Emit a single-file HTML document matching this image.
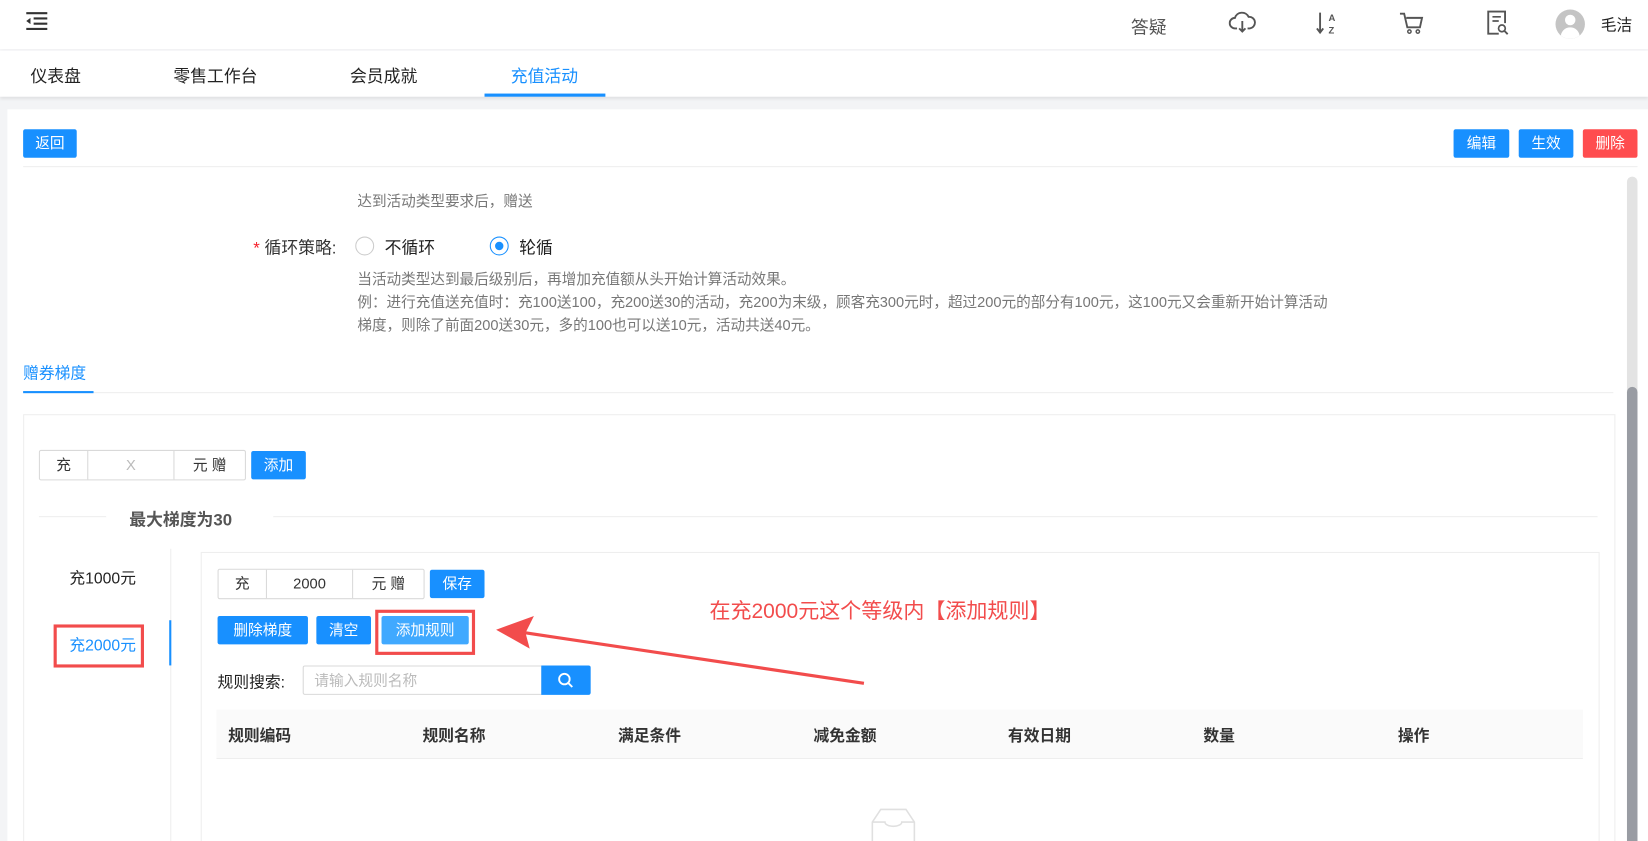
<!DOCTYPE html>
<html><head><meta charset="utf-8">
<style>
html,body{margin:0;padding:0;width:1648px;height:841px;overflow:hidden;background:#f3f4f6;}
#w{position:absolute;left:0;top:0;width:1568px;height:800px;overflow:hidden;transform:scale(1.05102,1.05125);transform-origin:0 0;font-family:"Liberation Sans","Noto Sans CJK SC",sans-serif;color:#333;}
.a{position:absolute;white-space:nowrap;}
.btn{position:absolute;background:#1890ff;color:#fff;font-size:14px;border-radius:2px;text-align:center;line-height:27px;height:27px;}
.gray{color:#777;font-size:13.9px;}
.ig{position:absolute;border:1px solid #d9d9d9;border-radius:2px;height:27px;background:#fff;font-size:14px;}
.ig div{position:absolute;top:0;height:27px;line-height:27px;text-align:center;border-right:1px solid #d9d9d9;}
.th{position:absolute;top:689px;font-size:15px;font-weight:bold;color:#333;}
</style></head><body>
<div id="w">
<div class="a" style="left:0;top:0;width:1568px;height:47px;background:#fff;box-shadow:0 1px 3px rgba(0,0,0,.06)"></div>
<svg class="a" style="left:24px;top:11px" width="22" height="18" viewBox="0 0 22 18"><path d="M1 1.5H21M8 6.5H21M8 11.5H21M1 16.5H21" stroke="#333" stroke-width="2"/><path d="M1 9L5 6V12Z" fill="#333"/></svg>
<div class="a" style="left:1076px;top:12px;font-size:17px;color:#555">答疑</div>
<svg class="a" style="left:1169px;top:11px" width="26" height="22" viewBox="0 0 26 22"><path d="M8 16H6a5 5 0 0 1 0-10 7 7 0 0 1 13-1 5 5 0 0 1 1 11h-2" fill="none" stroke="#555" stroke-width="1.8"/><path d="M13 9v10M10 16l3 3 3-3" fill="none" stroke="#555" stroke-width="1.8"/></svg>
<svg class="a" style="left:1252px;top:10px" width="22" height="24" viewBox="0 0 22 24"><path d="M4 2v19M1 17l3 4 3-4" fill="none" stroke="#555" stroke-width="1.8"/><text x="12" y="10" font-size="9" font-family="Liberation Sans" fill="#555" font-weight="bold">A</text><text x="12" y="22" font-size="9" font-family="Liberation Sans" fill="#555" font-weight="bold">Z</text></svg>
<svg class="a" style="left:1331px;top:11px" width="24" height="22" viewBox="0 0 24 22"><path d="M1 2h4l3 13h12l2-9H7" fill="none" stroke="#555" stroke-width="1.8"/><circle cx="10" cy="19" r="1.6" fill="none" stroke="#555" stroke-width="1.4"/><circle cx="18" cy="19" r="1.6" fill="none" stroke="#555" stroke-width="1.4"/></svg>
<svg class="a" style="left:1414px;top:9px" width="22" height="26" viewBox="0 0 22 26"><path d="M12 23H2V2h16v11" fill="none" stroke="#555" stroke-width="1.8"/><path d="M6 7h8M6 11h6" stroke="#555" stroke-width="1.6"/><circle cx="15" cy="18" r="3.2" fill="none" stroke="#555" stroke-width="1.6"/><path d="M17.5 20.5l3 3" stroke="#555" stroke-width="1.8"/></svg>
<div class="a" style="left:1480px;top:9px;width:28px;height:28px;border-radius:50%;background:#c4c4c4;overflow:hidden"><div class="a" style="left:9px;top:5px;width:10px;height:10px;border-radius:50%;background:#fff"></div><div class="a" style="left:5px;top:17px;width:18px;height:14px;border-radius:9px 9px 0 0;background:#fff"></div></div>
<div class="a" style="left:1523px;top:13px;font-size:15px;color:#222">毛洁</div>

<div class="a" style="left:0;top:48px;width:1568px;height:44px;background:#fff;box-shadow:0 2px 3px rgba(0,0,0,.08)"></div>
<div class="a" style="left:29px;top:59px;font-size:16px;color:#222">仪表盘</div>
<div class="a" style="left:165px;top:59px;font-size:16px;color:#222">零售工作台</div>
<div class="a" style="left:333px;top:59px;font-size:16px;color:#222">会员成就</div>
<div class="a" style="left:486px;top:59px;font-size:16px;color:#1890ff">充值活动</div>
<div class="a" style="left:461px;top:89px;width:115px;height:3px;background:#1890ff"></div>

<div class="a" style="left:7px;top:104px;width:1561px;height:800px;background:#fff"></div>
<div class="btn" style="left:22px;top:123px;width:51px">返回</div>
<div class="btn" style="left:1383px;top:123px;width:53px">编辑</div>
<div class="btn" style="left:1445px;top:123px;width:52px">生效</div>
<div class="btn" style="left:1506px;top:123px;width:52px;background:#ff4d4f">删除</div>
<div class="a" style="left:22px;top:158px;width:1536px;height:1px;background:#eee"></div>
<div class="a" style="left:1548px;top:168px;width:10px;height:740px;border-radius:5px;background:#e3e3e3"></div>
<div class="a" style="left:1548px;top:368px;width:10px;height:540px;border-radius:5px;background:#999ca3"></div>

<div class="a gray" style="left:340px;top:181px">达到活动类型要求后，赠送</div>
<div class="a" style="left:241px;top:222px;font-size:16px"><span style="color:#f5222d">*</span> 循环策略:</div>
<div class="a" style="left:338px;top:225px;width:16px;height:16px;border:1px solid #ccc;border-radius:50%"></div>
<div class="a" style="left:366px;top:222px;font-size:16px;color:#222">不循环</div>
<div class="a" style="left:466px;top:225px;width:16px;height:16px;border:1px solid #1890ff;border-radius:50%"><div class="a" style="left:4px;top:4px;width:8px;height:8px;border-radius:50%;background:#1890ff"></div></div>
<div class="a" style="left:494px;top:222px;font-size:16px;color:#222">轮循</div>
<div class="a gray" style="left:340px;top:255px">当活动类型达到最后级别后，再增加充值额从头开始计算活动效果。</div>
<div class="a gray" style="left:340px;top:277px">例：进行充值送充值时：充100送100，充200送30的活动，充200为末级，顾客充300元时，超过200元的部分有100元，这100元又会重新开始计算活动</div>
<div class="a gray" style="left:340px;top:299px">梯度，则除了前面200送30元，多的100也可以送10元，活动共送40元。</div>

<div class="a" style="left:22px;top:344px;font-size:15px;color:#1890ff">赠券梯度</div>
<div class="a" style="left:22px;top:373px;width:1513px;height:1px;background:#eee"></div>
<div class="a" style="left:22px;top:372px;width:67px;height:2px;background:#1890ff"></div>
<div class="a" style="left:22px;top:394px;width:1513px;height:520px;border:1px solid #eee"></div>

<div class="ig" style="left:37px;top:428px;width:195px"><div style="left:0;width:45px">充</div><div style="left:46px;width:81px;color:#bbb">X</div><div style="left:128px;width:67px;border:none">元 赠</div></div>
<div class="btn" style="left:239px;top:429px;width:52px">添加</div>
<div class="a" style="left:37px;top:491px;width:64px;height:1px;background:#eee"></div>
<div class="a" style="left:123px;top:481px;font-size:16px;font-weight:bold;color:#555">最大梯度为30</div>
<div class="a" style="left:260px;top:491px;width:1260px;height:1px;background:#eee"></div>

<div class="a" style="left:66px;top:539px;font-size:15px;color:#222">充1000元</div>
<div class="a" style="left:66px;top:603px;font-size:15px;color:#1890ff">充2000元</div>
<div class="a" style="left:51px;top:594px;width:80px;height:35px;border:3px solid #f24c4c"></div>
<div class="a" style="left:162px;top:522px;width:1px;height:390px;background:#eee"></div>
<div class="a" style="left:161px;top:590px;width:2px;height:43px;background:#1890ff"></div>

<div class="a" style="left:191px;top:525px;width:1329px;height:390px;border:1px solid #eee"></div>
<div class="ig" style="left:207px;top:541px;width:195px"><div style="left:0;width:45px">充</div><div style="left:46px;width:81px">2000</div><div style="left:128px;width:67px;border:none">元 赠</div></div>
<div class="btn" style="left:409px;top:542px;width:52px">保存</div>
<div class="btn" style="left:207px;top:586px;width:86px">删除梯度</div>
<div class="btn" style="left:301px;top:586px;width:52px">清空</div>
<div class="btn" style="left:363px;top:586px;width:83px;background:#40a9ff">添加规则</div>
<div class="a" style="left:357px;top:580px;width:89px;height:37px;border:3px solid #f24c4c"></div>

<div class="a" style="left:207px;top:638px;font-size:15px;color:#222">规则搜索:</div>
<div class="a" style="left:288px;top:633px;width:226px;height:26px;border:1px solid #d9d9d9;border-radius:2px 0 0 2px;font-size:14px;color:#bbb;line-height:26px;text-indent:10px">请输入规则名称</div>
<div class="a" style="left:515px;top:633px;width:47px;height:28px;background:#1890ff;border-radius:0 2px 2px 0"><svg style="position:absolute;left:15px;top:6px" width="17" height="17" viewBox="0 0 17 17"><circle cx="7" cy="7" r="5" fill="none" stroke="#fff" stroke-width="1.8"/><path d="M10.5 10.5l4 4" stroke="#fff" stroke-width="1.8"/></svg></div>

<div class="a" style="left:206px;top:675px;width:1300px;height:46px;background:#fafafa;border-bottom:1px solid #eee"></div>
<div class="th" style="left:217px">规则编码</div>
<div class="th" style="left:402px">规则名称</div>
<div class="th" style="left:588px">满足条件</div>
<div class="th" style="left:774px">减免金额</div>
<div class="th" style="left:959px">有效日期</div>
<div class="th" style="left:1145px">数量</div>
<div class="th" style="left:1330px">操作</div>
<svg class="a" style="left:826px;top:768px" width="48" height="36" viewBox="0 0 48 36"><path d="M4 14L12 2h24l8 12v20H4Z" fill="none" stroke="#e0e0e0" stroke-width="1.5"/><path d="M4 14h12a8 4 0 0 0 16 0h12" fill="none" stroke="#e0e0e0" stroke-width="1.5"/></svg>

<div class="a" style="left:675px;top:565px;font-size:20px;color:#f24c4c">在充2000元这个等级内【添加规则】</div>
<svg class="a" style="left:460px;top:585px" width="380" height="75" viewBox="0 0 380 75"><path d="M362 65L40 17" stroke="#f24c4c" stroke-width="3"/><path d="M12 14L48 1L40 17L44 32Z" fill="#f24c4c"/></svg>
</div>
</body></html>
